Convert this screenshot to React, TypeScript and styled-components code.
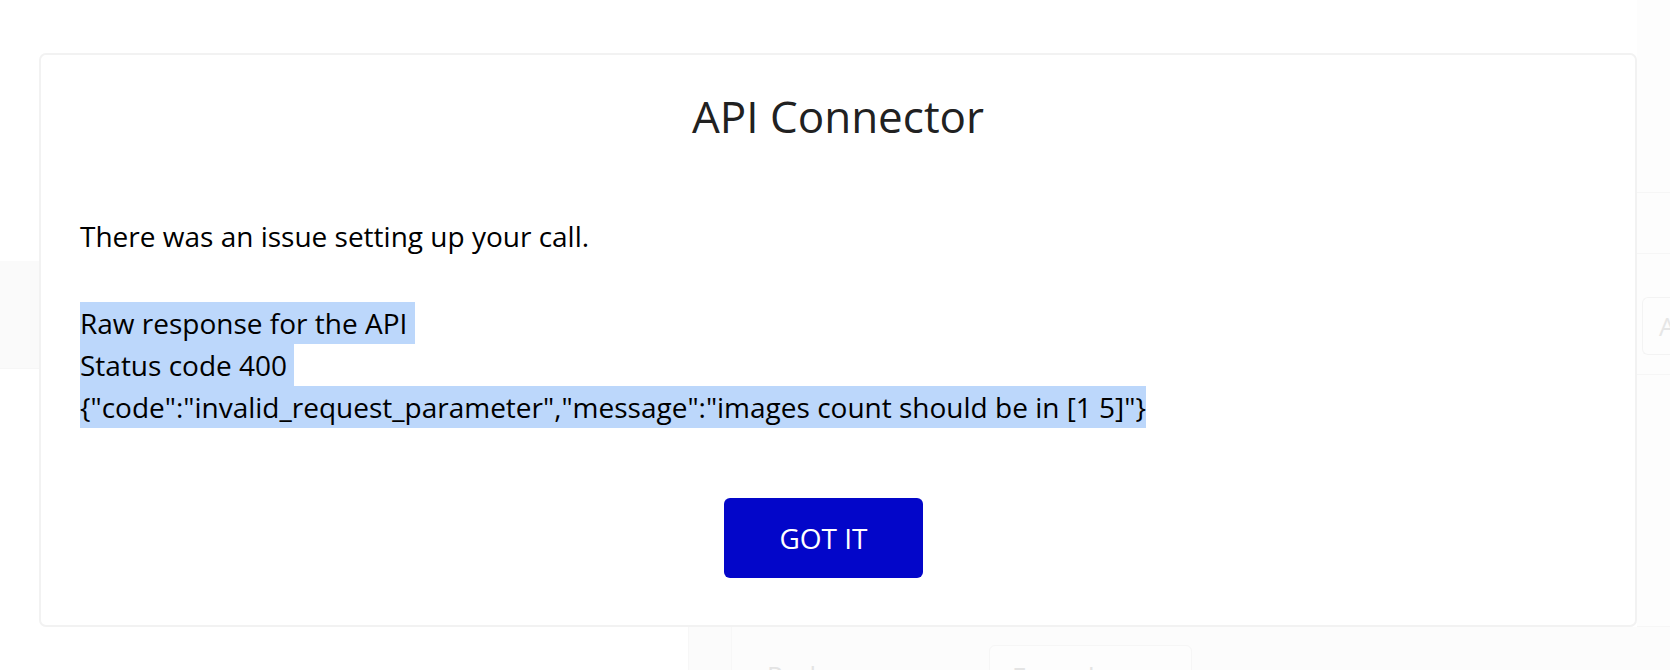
import React from "react";
import styled, { createGlobalStyle } from "styled-components";

const GlobalStyle = createGlobalStyle`
html, body {
	margin: 0;
	padding: 0;
	background: #ffffff;
}
body {
	font-family: "Open Sans", "Liberation Sans", sans-serif;
}
`

const rawLines = [
	"Raw response for the API ",
	"Status code 400 ",
	'{"code":"invalid_request_parameter","message":"images count should be in [1 5]"}',
];

export default function App() {
	return (
		<Screen>
			<GlobalStyle />
			{/* faded page behind the popup */}
			<Backdrop>
				<MiddleRow>
					<LeftRail>
						<RailBand />
					</LeftRail>
					<Canvas />
					<SidePanel>
						<PanelRow $height={193} />
						<PanelRow $height={61} />
						<PanelField>
							<FieldBox>A</FieldBox>
						</PanelField>
						<PanelRow $height={252} />
					</SidePanel>
				</MiddleRow>
				<BottomStrip>
					<BottomGap />
					<BottomColumn />
					<BottomMain>
						<PackCell>
							<FadedLabel>Pack...</FadedLabel>
						</PackCell>
						<FadedCard>
							<FadedLabel>Free plan...</FadedLabel>
						</FadedCard>
					</BottomMain>
				</BottomStrip>
			</Backdrop>

			<Popup>
				<Title>API Connector</Title>
				<Body>
					<Line>There was an issue setting up your call.</Line>
					<RawBlock>
						{rawLines.map((text) => (
							<Line key={text} $selected>{text}</Line>
						))}
					</RawBlock>
					<ButtonRow>
						<GotItButton>GOT IT</GotItButton>
					</ButtonRow>
				</Body>
			</Popup>
		</Screen>
	);
}

const Screen = styled.div`
position: relative;
width: 1670px;
height: 670px;
overflow: hidden;
background: #ffffff;
`

const Backdrop = styled.div`
display: flex;
flex-direction: column;
width: 100%;
height: 100%;
`

const MiddleRow = styled.div`
display: flex;
height: 627px;
`

const LeftRail = styled.div`
width: 39px;
padding-top: 261px;
`

const RailBand = styled.div`
height: 107px;
background: #fafafa;
border-bottom: 1px solid #f6f6f6;
`

const Canvas = styled.div`
flex: 1;
`

const SidePanel = styled.div`
width: 33px;
display: flex;
flex-direction: column;
background: #fdfdfd;
`

const PanelRow = styled.div<{ $height: number }>`
height: ${(p) => p.$height}px;
border-bottom: 1px solid #f6f6f6;
box-sizing: border-box;
`

const PanelField = styled.div`
height: 121px;
padding: 43px 0 20px 5px;
box-sizing: border-box;
border-bottom: 1px solid #f6f6f6;
`

const FieldBox = styled.div`
height: 58px;
border: 1px solid #f3f3f3;
border-right: none;
border-radius: 6px 0 0 6px;
box-sizing: border-box;
padding-left: 16px;
display: flex;
align-items: center;
font-size: 26px;
color: #e6e6e6;
`

const BottomStrip = styled.div`
flex: 1;
display: flex;
`

const BottomGap = styled.div`
width: 688px;
`

const BottomColumn = styled.div`
width: 42px;
background: #fbfbfb;
border-left: 1px solid #f7f7f7;
border-right: 1px solid #f7f7f7;
`

const BottomMain = styled.div`
flex: 1;
display: flex;
align-items: flex-start;
padding: 18px 0 0 35px;
background: #fcfcfc;
`

const PackCell = styled.div`
width: 222px;
`

const FadedCard = styled.div`
width: 203px;
height: 40px;
box-sizing: border-box;
padding-left: 22px;
background: #fdfdfd;
border: 1px solid #f6f6f6;
border-radius: 6px;
`

const FadedLabel = styled.span`
display: block;
padding-top: 12px;
font-size: 26px;
color: #e4e4e4;
`

const Popup = styled.div`
position: absolute;
left: 39px;
top: 53px;
width: 1598px;
height: 574px;
box-sizing: border-box;
padding-top: 31px;
background: #ffffff;
border: 2px solid #f2f2f2;
border-radius: 7px;
`

const Title = styled.h1`
margin: 0;
font-size: 44px;
line-height: 60px;
font-weight: 400;
text-align: center;
color: #212121;
`

const Body = styled.div`
padding: 69px 68px 0 39px;
`

const RawBlock = styled.div`
margin-top: 45px;
`

const Line = styled.div<{ $selected?: boolean }>`
width: fit-content;
font-size: 28px;
line-height: 42px;
white-space: pre;
color: #000000;
background: ${(p) => (p.$selected ? "#bcd7fb" : "transparent")};
`

const ButtonRow = styled.div`
display: flex;
justify-content: center;
margin-top: 70px;
`

const GotItButton = styled.button`
width: 199px;
height: 80px;
border: none;
border-radius: 6px;
background: #0306c9;
color: #ffffff;
font-family: "Open Sans", "Liberation Sans", sans-serif;
font-size: 28px;
font-weight: 400;
cursor: pointer;
`
